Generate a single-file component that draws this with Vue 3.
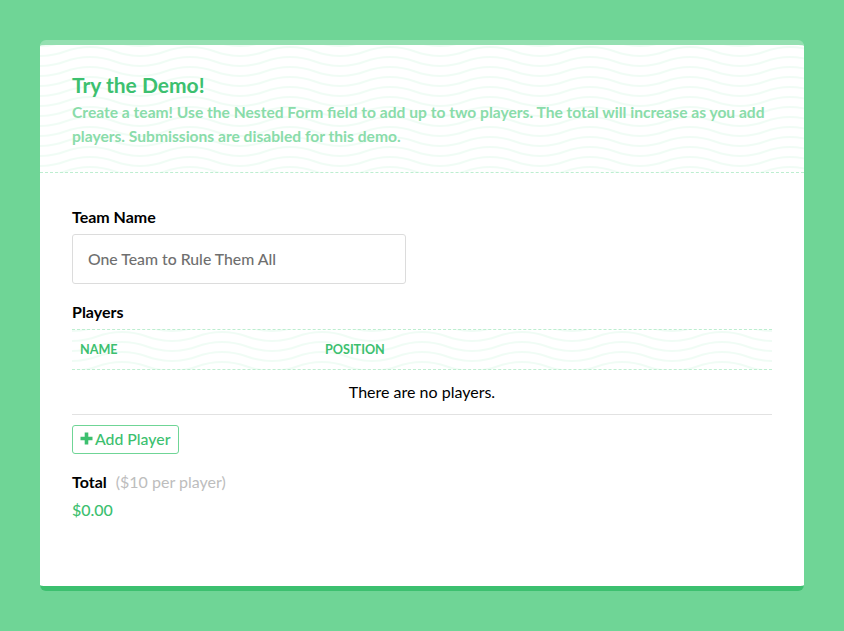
<script setup>
const columns = ['Name', 'Position']
</script>

<template>
  <div class="page">
    <section class="card">
      <header class="intro">
        <h1>Try the Demo!</h1>
        <p>Create a team! Use the Nested Form field to add up to two players. The total will increase as you add players. Submissions are disabled for this demo.</p>
      </header>
      <div class="body">
        <label class="label" for="team">Team Name</label>
        <input id="team" class="input" type="text" value="One Team to Rule Them All" />
        <div class="label players">Players</div>
        <div class="thead">
          <span v-for="c in columns" :key="c" class="th">{{ c }}</span>
        </div>
        <div class="empty">There are no players.</div>
        <button class="add" type="button">
          <svg width="13" height="13" viewBox="0 0 13 13"><path d="M4.7 .5h3.6v4.2h4.2v3.6H8.300v4.200H4.700V8.300H.5V4.700h4.200z" fill="#3cc06f" /></svg>
          Add Player
        </button>
        <div class="total"><span class="label inline">Total</span><span class="hint">($10 per player)</span></div>
        <div class="price">$0.00</div>
      </div>
    </section>
  </div>
</template>

<style scoped>
.page {
  height: 631px;
  box-sizing: border-box;
  padding: 40px 40px 40px;
  background: #6fd596;
  font-family: Lato, sans-serif;
}
.card {
  height: 551px;
  box-sizing: border-box;
  background: #fff;
  border-radius: 6px;
  border-top: 5px solid #94e0b1;
  border-bottom: 5px solid #3cc06f;
  overflow: hidden;
}
.intro {
  height: 128px;
  box-sizing: border-box;
  padding: 24px 32px 0;
  border-bottom: 1px dashed #bdeed0;
  background-image: url("data:image/svg+xml,%3Csvg xmlns='http://www.w3.org/2000/svg' width='100' height='10'%3E%3Cg fill='none' stroke='%2340d080' stroke-opacity='.08' stroke-width='2'%3E%3Cpath d='M0 11C25 11 25 2 50 2S75 11 100 11'/%3E%3Cpath d='M0 1C25 1 25-8 50-8S75 1 100 1'/%3E%3Cpath d='M0 21C25 21 25 12 50 12S75 21 100 21'/%3E%3C/g%3E%3C/svg%3E");
}
h1 {
  margin: 0;
  font-size: 21px;
  line-height: 31px;
  font-weight: 700;
  color: #3cc06f;
}
.intro p {
  margin: 0;
  font-size: 15.6px;
  line-height: 24px;
  font-weight: 700;
  color: #8adcaa;
}
.body {
  padding: 34px 32px 0;
}
.label {
  display: block;
  font-size: 16px;
  line-height: 20px;
  font-weight: 700;
  color: #000;
}
.input {
  display: block;
  width: 334px;
  height: 50px;
  box-sizing: border-box;
  margin-top: 7px;
  padding: 0 15px 2px;
  border: 1px solid #dcdcdc;
  border-radius: 3px;
  font: 500 15.8px Lato, sans-serif;
  color: #6f6f6f;
  outline: none;
}
.players {
  margin-top: 18px;
}
.thead {
  display: grid;
  grid-template-columns: 245px 1fr;
  width: 700px;
  height: 41px;
  box-sizing: border-box;
  margin-top: 7px;
  padding: 0 8px;
  align-items: center;
  border-top: 1px dashed #bdeed0;
  border-bottom: 1px dashed #bdeed0;
  background-image: url("data:image/svg+xml,%3Csvg xmlns='http://www.w3.org/2000/svg' width='100' height='10'%3E%3Cg fill='none' stroke='%2340d080' stroke-opacity='.08' stroke-width='2'%3E%3Cpath d='M0 11C25 11 25 2 50 2S75 11 100 11'/%3E%3Cpath d='M0 1C25 1 25-8 50-8S75 1 100 1'/%3E%3Cpath d='M0 21C25 21 25 12 50 12S75 21 100 21'/%3E%3C/g%3E%3C/svg%3E");
}
.th {
  font-size: 12.6px;
  font-weight: 700;
  text-transform: uppercase;
  color: #3cc06f;
}
.empty {
  width: 700px;
  height: 45px;
  box-sizing: border-box;
  border-bottom: 1px solid #e2e2e2;
  text-align: center;
  font-size: 16px;
  line-height: 44px;
  color: #000;
}
.add {
  display: flex;
  align-items: center;
  gap: 2px;
  height: 29px;
  box-sizing: border-box;
  margin-top: 10px;
  padding: 0 8px 2px 7px;
  background: #fff;
  border: 1px solid #6fd596;
  border-radius: 3px;
  font: 500 15.8px Lato, sans-serif;
  color: #3cc06f;
}
.total {
  display: flex;
  align-items: baseline;
  gap: 9px;
  margin-top: 18px;
  line-height: 20px;
}
.inline {
  display: inline;
}
.hint {
  font-size: 16px;
  color: #bdbdbd;
}
.price {
  margin-top: 8px;
  font-size: 16px;
  font-weight: 500;
  line-height: 20px;
  color: #3cc06f;
}
</style>
